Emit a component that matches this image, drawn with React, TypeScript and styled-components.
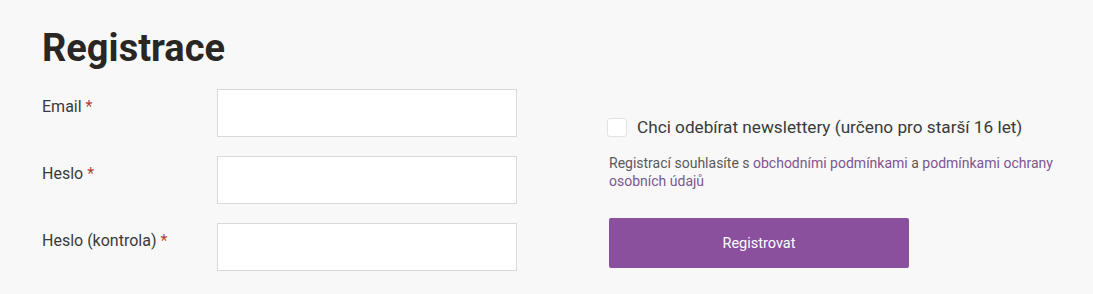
import * as React from 'react';
import styled, { createGlobalStyle } from 'styled-components';

const GlobalStyle = createGlobalStyle`
    html, body {
        margin: 0;
        padding: 0;
        background: #f8f8f8;
    }
    body {
        font-family: Roboto, "Liberation Sans", Arial, sans-serif;
        color: #333;
    }
`;

const Page = styled.div`
    width: 1093px;
    height: 294px;
    box-sizing: border-box;
    padding: 26px 42px 0 42px;
    background: #f8f8f8;
`;

const Title = styled.h1`
    margin: 0 0 19px 0;
    font-size: 38px;
    line-height: 44px;
    font-weight: 700;
    color: #2a2623;
`;

const Columns = styled.div`
    display: flex;
    align-items: flex-start;
    gap: 92px;
`;

const Fields = styled.div`
    display: flex;
    flex-direction: column;
    gap: 19px;
`;

const Row = styled.div`
    display: flex;
    align-items: flex-start;
`;

const Label = styled.label`
    width: 175px;
    padding-top: 8px;
    font-size: 16px;
    line-height: 20px;
    color: #3a3a3a;
`;

const Required = styled.span`
    color: #b3433a;
    margin-left: 4px;
`;

const Input = styled.input`
    width: 300px;
    height: 48px;
    box-sizing: border-box;
    border: 1px solid #d8d8d8;
    background: #fff;
    margin: 0;
    padding: 0 12px;
    font: inherit;
`;

const Side = styled.div`
    display: flex;
    flex-direction: column;
    padding-top: 28px;
`;

const CheckRow = styled.label`
    display: flex;
    align-items: center;
    gap: 10px;
    font-size: 17.2px;
    line-height: 20px;
    color: #3a3a3a;
    margin-left: -2px;
`;

const Box = styled.span`
    width: 20px;
    height: 19px;
    box-sizing: border-box;
    border: 1px solid #e2e2e2;
    border-radius: 3px;
    background: #fff;
`;

const Terms = styled.p`
    margin: 17px 0 0 0;
    width: 450px;
    font-size: 14px;
    line-height: 18px;
    color: #5a5a5a;
`;

const TermsLink = styled.a`
    color: #7c5591;
    text-decoration: none;
`;

const Submit = styled.button`
    margin-top: 28px;
    width: 300px;
    height: 50px;
    border: 0;
    border-radius: 2px;
    background: #8a4f9d;
    color: #fff;
    font-family: inherit;
    font-size: 14.5px;
    font-weight: 400;
    cursor: pointer;
`;

const fields = [
    { id: 'email', label: 'Email', type: 'email' },
    { id: 'password', label: 'Heslo', type: 'password' },
    { id: 'password2', label: 'Heslo (kontrola)', type: 'password' },
];

export default function App() {
    return (
        <>
            <GlobalStyle />
            <Page>
                <Title>Registrace</Title>
                <Columns>
                    <Fields>
                        {fields.map(f => (
                            <Row key={f.id}>
                                <Label htmlFor={f.id}>
                                    {f.label}<Required>*</Required>
                                </Label>
                                <Input id={f.id} type={f.type} />
                            </Row>
                        ))}
                    </Fields>
                    <Side>
                        <CheckRow>
                            <Box />
                            Chci odebírat newslettery (určeno pro starší 16 let)
                        </CheckRow>
                        <Terms>
                            Registrací souhlasíte s <TermsLink href="#">obchodními podmínkami</TermsLink> a{' '}
                            <TermsLink href="#">podmínkami ochrany osobních údajů</TermsLink>
                        </Terms>
                        <Submit>Registrovat</Submit>
                    </Side>
                </Columns>
            </Page>
        </>
    );
}
